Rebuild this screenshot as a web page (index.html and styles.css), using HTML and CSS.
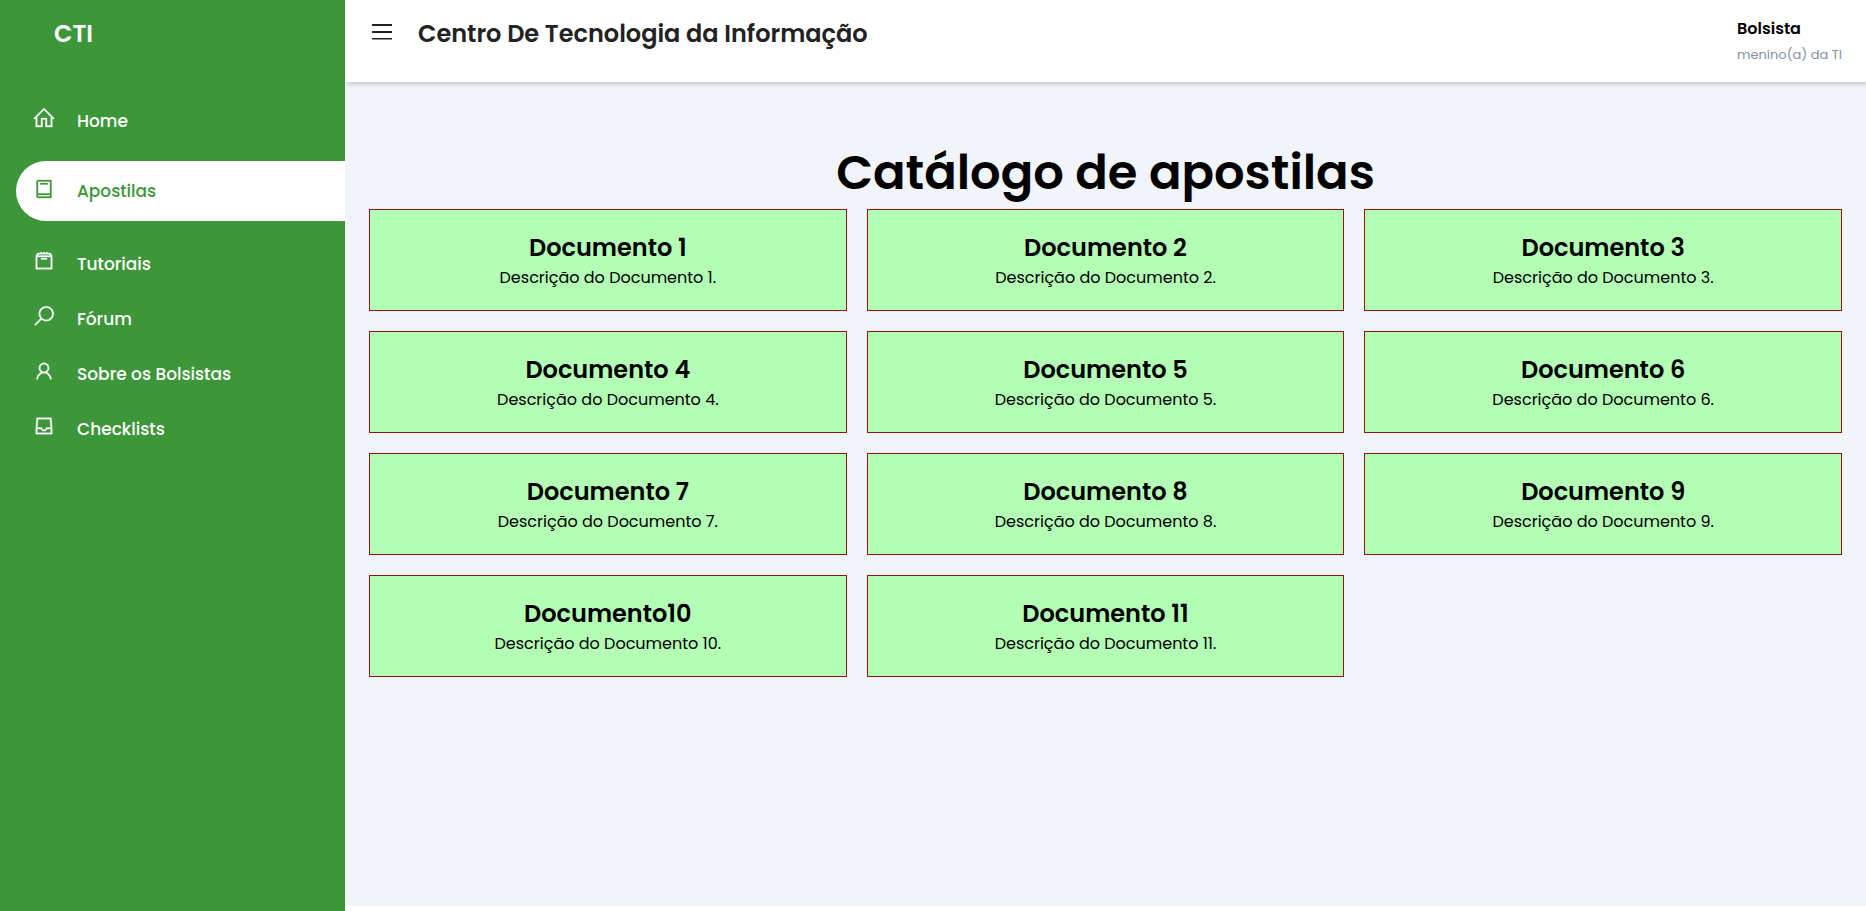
FILE: index.html
```html
<!DOCTYPE html>
<html lang="pt-BR">
<head>
<meta charset="utf-8">
<title>CTI - Apostilas</title>
<link rel="stylesheet" href="styles.css">
</head>
<body>
<aside class="sidebar">
  <h2 class="brand">CTI</h2>
  <nav>
    <ul class="menu">
      <li><a href="#" class="link"><svg class="icon" viewBox="0 0 32 32"><path d="M16 2.6 2.3 16.3l1.4 1.4L5 16.44V28h9V18h4v10h9V16.44l1.3 1.28 1.4-1.42ZM16 5.44l9 9V26h-5V16h-8v10H7V14.44Z"/></svg>Home</a></li>
      <li class="current"><a href="#" class="link active" aria-current="page"><svg class="icon" viewBox="0 0 32 32"><path fill-rule="evenodd" d="M8 4C6.9 4 6 4.9 6 6v20c0 1.100.9 2 2 2h18V4ZM8 6h16v16H8ZM8 24h16v2H8ZM11 8h10v2H11Z"/></svg>Apostilas</a></li>
      <li><a href="#" class="link"><svg class="icon" viewBox="0 0 32 32"><path fill-rule="evenodd" d="M7.500 5 5 9v18h22V9l-2.500-4-2 .8L20 4l-2 1.400L16 4l-2 1.400L12 4 9.500 5.800ZM8.600 7h14.800l.8 1.500H7.800ZM7 10.500h18V25H7ZM12 12h8v2h-8Z"/></svg>Tutoriais</a></li>
      <li><a href="#" class="link"><svg class="icon" viewBox="0 0 32 32"><path fill-rule="evenodd" d="M19 3C13.490 3 9 7.490 9 13c0 2.390.84 4.590 2.250 6.310L3.280 27.280l1.440 1.440 7.970-7.970C14.410 22.160 16.600 23 19 23c5.510 0 10-4.490 10-10S24.510 3 19 3Zm0 2c4.430 0 8 3.570 8 8s-3.570 8-8 8-8-3.570-8-8 3.570-8 8-8Z"/></svg>Fórum</a></li>
      <li><a href="#" class="link"><svg class="icon" viewBox="0 0 32 32"><path fill-rule="evenodd" d="M16 5c-3.860 0-7 3.140-7 7 0 2.410 1.230 4.550 3.090 5.810C8.530 19.340 6 22.880 6 27h2c0-4.430 3.570-8 8-8s8 3.570 8 8h2c0-4.120-2.530-7.660-6.090-9.190C21.770 16.550 23 14.410 23 12c0-3.860-3.140-7-7-7Zm0 2c2.770 0 5 2.230 5 5s-2.230 5-5 5-5-2.230-5-5 2.230-5 5-5Z"/></svg>Sobre os Bolsistas</a></li>
      <li><a href="#" class="link"><svg class="icon" viewBox="0 0 32 32"><path fill-rule="evenodd" d="M6.200 5 5 18.900V27h22v-8.100L25.800 5ZM8 7h16l.9 11H19l-.3.700c-.5 1.200-1.400 2.300-2.700 2.300s-2.200-1.100-2.700-2.300L13 18H7.100ZM7 20h4.800c.8 1.700 2.200 3 4.200 3s3.400-1.300 4.200-3H25v5H7Z"/></svg>Checklists</a></li>
    </ul>
  </nav>
</aside>
<div class="content">
  <header class="topbar">
    <div class="heading">
      <button type="button" class="toggle" aria-label="Menu"><svg class="bars" viewBox="0 0 28 28"><path d="M3 6h20v2H3zM3 13h20v2H3zM3 20h20v1.600H3z"/></svg></button>
      <h2 class="site">Centro De Tecnologia da Informação</h2>
    </div>
    <div class="user">
      <h4 class="name">Bolsista</h4>
      <small class="role">menino(a) da TI</small>
    </div>
  </header>
  <main class="main">
    <h1 class="title">Catálogo de apostilas</h1>
    <section class="grid">
      <article class="card"><h2>Documento 1</h2><p>Descrição do Documento 1.</p></article>
      <article class="card"><h2>Documento 2</h2><p>Descrição do Documento 2.</p></article>
      <article class="card"><h2>Documento 3</h2><p>Descrição do Documento 3.</p></article>
      <article class="card"><h2>Documento 4</h2><p>Descrição do Documento 4.</p></article>
      <article class="card"><h2>Documento 5</h2><p>Descrição do Documento 5.</p></article>
      <article class="card"><h2>Documento 6</h2><p>Descrição do Documento 6.</p></article>
      <article class="card"><h2>Documento 7</h2><p>Descrição do Documento 7.</p></article>
      <article class="card"><h2>Documento 8</h2><p>Descrição do Documento 8.</p></article>
      <article class="card"><h2>Documento 9</h2><p>Descrição do Documento 9.</p></article>
      <article class="card"><h2>Documento10</h2><p>Descrição do Documento 10.</p></article>
      <article class="card"><h2>Documento 11</h2><p>Descrição do Documento 11.</p></article>
    </section>
  </main>
</div>
</body>
</html>
```
FILE: styles.css
```css
* {
  box-sizing: border-box;
  margin: 0;
  padding: 0;
}

body {
  display: flex;
  min-height: 100vh;
  font-family: Poppins, Inter, sans-serif;
  font-size: 16px;
  line-height: 24px;
  color: #000;
  background: #fff;
}

.sidebar {
  flex: 0 0 345px;
  padding: 16px 0 0 16px;
  background: #3d973a;
  color: #fff;
}

.brand {
  padding-left: 38px;
  font-size: 24px;
  font-weight: 600;
  line-height: 36px;
}

.menu {
  padding-top: 54px;
  list-style: none;
}

.menu li {
  margin-bottom: 26px;
}

.menu .current {
  margin-bottom: 28px;
}

.link {
  display: flex;
  align-items: center;
  gap: 21px;
  height: 29px;
  padding-left: 16px;
  font-size: 17px;
  font-weight: 500;
  color: #fff;
  text-decoration: none;
}

.link.active {
  height: 60px;
  border-radius: 30px 0 0 30px;
  background: #fff;
  color: #3d973a;
}

.icon {
  width: 24px;
  height: 24px;
  margin-bottom: 5px;
  fill: currentColor;
  stroke: currentColor;
  stroke-width: 0.4;
}

.content {
  display: flex;
  flex: 1;
  flex-direction: column;
  min-width: 0;
  padding-bottom: 5px;
}

.topbar {
  display: flex;
  justify-content: space-between;
  height: 82px;
  padding: 16px 24px;
  background: #fff;
  box-shadow: 2px 2px 5px rgba(0, 0, 0, 0.2);
  z-index: 1;
}

.heading {
  display: flex;
  align-items: flex-start;
  gap: 21px;
}

.toggle {
  display: flex;
  padding: 2px 0 0;
  border: 0;
  background: none;
  color: #222;
}

.bars {
  width: 28px;
  height: 28px;
  fill: currentColor;
}

.site {
  font-size: 24px;
  font-weight: 600;
  line-height: 36px;
  color: #222;
}

.name {
  font-size: 16px;
  font-weight: 600;
  line-height: 26px;
}

.role {
  display: block;
  font-size: 13px;
  line-height: 26px;
  color: #8390a2;
}

.main {
  flex: 1;
  padding: 55px 24px 24px;
  background: #f1f5f9;
}

.title {
  font-size: 48px;
  font-weight: 600;
  line-height: 72px;
  text-align: center;
}

.grid {
  display: grid;
  grid-template-columns: repeat(3, 1fr);
  gap: 20px;
}

.card {
  padding: 20px;
  border: 1px solid #9b1010;
  background: #b3fdb5;
  text-align: center;
}

.card h2 {
  font-size: 24px;
  font-weight: 600;
  line-height: 36px;
}
```
